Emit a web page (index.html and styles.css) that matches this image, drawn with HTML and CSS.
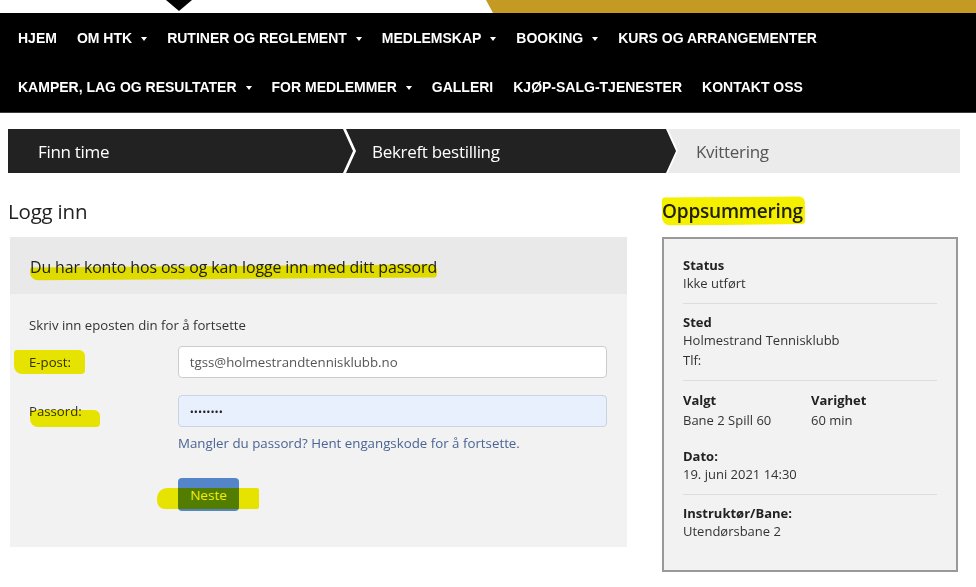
FILE: index.html
```html
<!DOCTYPE html>
<html lang="no">
<head>
  <meta charset="UTF-8" />
  <meta name="viewport" content="width=device-width, initial-scale=1.0" />
  <title>Booking - Logg inn</title>
  <link rel="stylesheet" href="styles.css">
</head>
<body>
  <div class="topbar">
    <span class="topbar-arrow"></span>
    <span class="topbar-gold"></span>
  </div>

  <nav class="mainnav">
    <ul class="nav-row">
      <li>HJEM</li>
      <li class="has-sub">OM HTK</li>
      <li class="has-sub">RUTINER OG REGLEMENT</li>
      <li class="has-sub">MEDLEMSKAP</li>
      <li class="has-sub">BOOKING</li>
      <li>KURS OG ARRANGEMENTER</li>
    </ul>
    <ul class="nav-row">
      <li class="has-sub">KAMPER, LAG OG RESULTATER</li>
      <li class="has-sub">FOR MEDLEMMER</li>
      <li>GALLERI</li>
      <li>KJØP-SALG-TJENESTER</li>
      <li>KONTAKT OSS</li>
    </ul>
  </nav>

  <main class="page">
    <ol class="steps">
      <li class="step step-first">Finn time</li>
      <li class="step step-mid">Bekreft bestilling</li>
      <li class="step step-last">Kvittering</li>
    </ol>

    <div class="columns">
      <section class="login">
        <h2 class="section-title">Logg inn</h2>
        <div class="login-panel">
          <div class="login-head"><span class="hl hl-under">Du har konto hos oss og kan logge inn med ditt passord</span></div>
          <form class="login-body">
            <p class="login-intro">Skriv inn eposten din for å fortsette</p>
            <div class="form-row">
              <label for="email"><span class="hl hl-email">E-post:</span></label>
              <input type="text" id="email" value="tgss@holmestrandtennisklubb.no">
            </div>
            <div class="form-row">
              <label for="password"><span class="hl hl-pass">Passord:</span></label>
              <input type="password" id="password" class="autofill" value="tennis21">
            </div>
            <a class="otp-link" href="#">Mangler du passord? Hent engangskode for å fortsette.</a>
            <div class="form-actions">
              <span class="hl hl-btn"><button type="button" class="btn-next">Neste</button></span>
            </div>
          </form>
        </div>
      </section>

      <aside class="summary">
        <h2 class="section-title summary-title"><span class="hl hl-full">Oppsummering</span></h2>
        <div class="summary-box">
          <div class="summary-block">
            <div class="s-label">Status</div>
            <div class="s-value">Ikke utført</div>
          </div>
          <div class="summary-block">
            <div class="s-label">Sted</div>
            <div class="s-value">Holmestrand Tennisklubb</div>
            <div class="s-value s-extra">Tlf:</div>
          </div>
          <div class="summary-block">
            <div class="s-pair">
              <div>
                <div class="s-label">Valgt</div>
                <div class="s-value s-extra">Bane 2 Spill 60</div>
              </div>
              <div>
                <div class="s-label">Varighet</div>
                <div class="s-value s-extra">60 min</div>
              </div>
            </div>
            <div class="s-label s-gap">Dato:</div>
            <div class="s-value">19. juni 2021 14:30</div>
          </div>
          <div class="summary-block summary-block-last">
            <div class="s-label">Instruktør/Bane:</div>
            <div class="s-value">Utendørsbane 2</div>
          </div>
        </div>
      </aside>
    </div>
  </main>
</body>
</html>
```

FILE: styles.css
```css
body {
  margin: 0;
  font-family: "Open Sans", "Noto Sans", sans-serif;
  color: #222;
  background: #fff;
}
ul, ol {
  list-style: none;
  margin: 0;
  padding: 0;
}

/* top strip */
.topbar {
  display: flex;
  align-items: flex-start;
  height: 13px;
}
.topbar-arrow {
  margin-left: 166px;
  width: 0;
  height: 0;
  border-left: 13px solid transparent;
  border-right: 13px solid transparent;
  border-top: 11px solid #000;
}
.topbar-gold {
  margin-left: auto;
  width: 490px;
  height: 13px;
  background: #c49a22;
  clip-path: polygon(0 0, 100% 0, 100% 100%, 7px 100%);
}

/* main nav */
.mainnav {
  background: #000;
  padding-left: 18px;
  border-bottom: 1px solid #3a3a3a;
}
.nav-row {
  display: flex;
  gap: 20px;
  height: 50px;
  align-items: center;
}
.nav-row:first-child {
  height: 49px;
}
.nav-row li {
  color: #fff;
  font-family: "Liberation Sans", Arial, sans-serif;
  font-size: 14px;
  font-weight: bold;
  white-space: nowrap;
}
.nav-row li.has-sub::after {
  content: "";
  display: inline-block;
  margin-left: 9px;
  vertical-align: middle;
  border-left: 3.5px solid transparent;
  border-right: 3.5px solid transparent;
  border-top: 4px solid #fff;
}

/* page */
.page {
  padding: 16px 16px 0 8px;
}
.steps {
  display: flex;
  height: 44px;
}
.step {
  display: flex;
  align-items: center;
  font-size: 17px;
  letter-spacing: -0.3px;
}
.step-first {
  width: 345px;
  padding-left: 30px;
  box-sizing: border-box;
  background: #222;
  color: #fff;
  clip-path: polygon(0 0, calc(100% - 10px) 0, 100% 50%, calc(100% - 10px) 100%, 0 100%);
}
.step-mid {
  width: 330px;
  margin-left: -7px;
  padding-left: 26px;
  box-sizing: border-box;
  background: #222;
  color: #fff;
  clip-path: polygon(0 0, calc(100% - 10px) 0, 100% 50%, calc(100% - 10px) 100%, 0 100%, 10px 50%);
}
.step-last {
  flex: 1;
  margin-left: -8px;
  padding-left: 28px;
  background: #ebebeb;
  color: #555;
  clip-path: polygon(0 0, 100% 0, 100% 100%, 0 100%, 10px 50%);
}

.columns {
  display: grid;
  grid-template-columns: 620px 1fr;
  gap: 34px;
  margin-top: 26px;
}
.section-title {
  margin: 0 0 14px;
  font-size: 19px;
  font-weight: 600;
  line-height: 24px;
  color: #222;
  letter-spacing: -0.2px;
}
.login .section-title {
  font-size: 20.5px;
  font-weight: normal;
}

/* login panel */
.login-panel {
  margin-left: 2px;
  width: 617px;
  background: #f2f2f2;
}
.login-head {
  height: 57px;
  padding-left: 20px;
  display: flex;
  align-items: center;
  padding-top: 2px;
  box-sizing: border-box;
  background: #e9e9e9;
  font-size: 15.9px;
  letter-spacing: -0.1px;
}
.login-body {
  padding: 22px 20px 36px 19px;
}
.login-intro {
  margin: 0 0 12px;
  font-size: 13.2px;
  line-height: 18px;
  color: #333;
}
.form-row {
  display: flex;
  align-items: center;
  margin-bottom: 17px;
}
.form-row label {
  width: 149px;
  font-size: 13.2px;
  color: #333;
}
.form-row input {
  width: 430px;
  height: 32px;
  box-sizing: border-box;
  padding: 0 11px;
  border: 1px solid #ccc;
  border-radius: 4px;
  background: #fff;
  font-family: "Open Sans", sans-serif;
  font-size: 13.25px;
  color: #555;
}
.form-row input.autofill {
  background: #e8f0fe;
  border-color: #c9d3e3;
  font-size: 11px;
  color: #222;
}
.otp-link {
  display: block;
  margin: -11px 0 0 149px;
  line-height: 20px;
  font-size: 13.3px;
  color: #4a6494;
  text-decoration: none;
}
.form-actions {
  margin: 25px 0 0 149px;
}
.btn-next {
  width: 61px;
  height: 33px;
  border: 0;
  border-radius: 4px;
  background: #5585c9;
  color: #fff;
  font-family: "Open Sans", sans-serif;
  font-size: 13.5px;
  padding: 0;
}

/* summary */
.summary-box {
  width: 296px;
  min-height: 335px;
  box-sizing: border-box;
  border: 2px solid #999;
  background: #f2f2f2;
  padding: 0 19px 0 19px;
}
.summary-block {
  padding: 10px 0 11px;
  border-bottom: 1px solid #ddd;
}
.summary-block:first-child {
  padding-top: 18px;
}
.summary-block-last {
  border-bottom: 0;
}
.s-label {
  font-size: 13px;
  font-weight: bold;
  line-height: 17px;
  color: #222;
}
.s-value {
  font-size: 13px;
  line-height: 18px;
  color: #333;
}
.s-extra {
  margin-top: 2px;
}
.s-pair {
  display: grid;
  grid-template-columns: 128px 1fr;
}
.summary-block:nth-child(3) {
  padding-top: 11px;
}
.s-gap {
  margin-top: 19px;
}

/* yellow marker strokes drawn on the screenshot */
.hl {
  position: relative;
}
.hl::after {
  content: "";
  position: absolute;
  background: #f4f000;
  mix-blend-mode: multiply;
  border-radius: 3px 6px 4px 8px;
  pointer-events: none;
}
.hl-under::after {
  left: 0;
  right: 0;
  top: 10px;
  height: 13px;
  transform: rotate(-0.4deg);
}
.hl-full::after {
  left: 0;
  right: -2px;
  top: -1px;
  bottom: -1px;
  transform: rotate(-0.5deg);
}
.hl-email::after {
  left: -15px;
  right: -14px;
  top: -3px;
  bottom: -3px;
}
.hl-pass::after {
  left: 1px;
  right: -18px;
  top: 8px;
  height: 17px;
}
.hl-btn {
  display: inline-block;
  vertical-align: top;
}
.hl-btn::after {
  left: -21px;
  right: -20px;
  top: 10px;
  height: 21px;
  border-radius: 10px 2px 2px 8px;
}
```
